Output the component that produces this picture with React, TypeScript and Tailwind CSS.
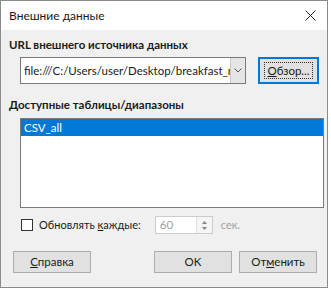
import React from 'react';

const App: React.FC = () => {
  return (
    <div className="w-[331px] h-[292px] bg-white" style={{ fontFamily: 'Lato, "Noto Sans", sans-serif' }}>
      <div className="w-[328px] h-[288px] border border-[#8a8a8a] bg-[#f0f0f0] flex flex-col">
        {/* title bar */}
        <div className="h-[29px] bg-white flex items-center justify-between pl-[8px] pr-[9px]">
          <span className="text-[12px] text-[#1a1a1a]">Внешние данные</span>
          <svg width="11" height="11" viewBox="0 0 11 11" className="mr-[2px]">
            <path d="M0.5 0.5 L10.5 10.5 M10.5 0.5 L0.5 10.5" stroke="#222" strokeWidth="1" />
          </svg>
        </div>

        <div className="flex flex-col px-[8px] pt-[7px]">
          <span className="text-[11.5px] font-bold text-[#1a1a1a] leading-[16px]">URL внешнего источника данных</span>

          <div className="flex items-center mt-[4px] pl-[11px]">
            <div className="w-[226px] h-[27px] bg-white border border-[#7a7a7a] flex">
              <div className="flex-1 overflow-hidden whitespace-nowrap text-[11.5px] leading-[25px] pl-[3px] text-[#1a1a1a]">
                file:///C:/Users/user/Desktop/breakfast_menu.xml
              </div>
              <div className="w-[15px] bg-[#e5e5e5] border-l border-[#c8c8c8] flex items-center justify-center">
                <svg width="8" height="5" viewBox="0 0 8 5">
                  <path d="M0.5 0.5 L4 4 L7.5 0.5" stroke="#555" strokeWidth="1" fill="none" />
                </svg>
              </div>
            </div>
            <button className="ml-[12px] w-[65px] h-[27px] bg-[#e1e1e1] border-2 border-[#0078d7] flex items-center justify-center">
              <span className="border border-dotted border-[#333] px-[2px] text-[11.5px] leading-[15px] text-[#1a1a1a]">
                <span className="underline">О</span>бзор...
              </span>
            </button>
          </div>

          <span className="text-[11.5px] font-bold text-[#1a1a1a] leading-[16px] mt-[13px]">Доступные таблицы/диапазоны</span>

          <div className="ml-[11px] mt-[5px] w-[304px] h-[90px] bg-white border border-[#7a7a7a]">
            <div className="h-[17px] bg-[#0078d7] text-white text-[11.5px] leading-[17px] pl-[3px]">CSV_all</div>
          </div>

          <div className="flex items-center mt-[8px] pl-[12px] h-[18px]">
            <div className="w-[12px] h-[12px] border border-[#333] bg-white" />
            <span className="ml-[6px] text-[11px] text-[#1a1a1a]">
              Обновлять <span className="underline">к</span>аждые:
            </span>
            <div className="ml-[14px] w-[58px] h-[18px] bg-white border border-[#cccccc] flex">
              <span className="flex-1 text-[11.5px] leading-[16px] pl-[4px] text-[#a0a0a0]">60</span>
              <div className="w-[16px] flex flex-col items-center justify-center gap-[3px] border-l border-[#e0e0e0] bg-[#f5f5f5]">
                <svg width="5" height="3" viewBox="0 0 5 3"><path d="M0 3 L2.5 0 L5 3 Z" fill="#888" /></svg>
                <svg width="5" height="3" viewBox="0 0 5 3"><path d="M0 0 L2.5 3 L5 0 Z" fill="#888" /></svg>
              </div>
            </div>
            <span className="ml-[8px] text-[11px] text-[#a0a0a0]">сек.</span>
          </div>

          <div className="flex items-center mt-[17px] pl-[4px]">
            <button className="w-[78px] h-[22px] bg-[#e1e1e1] border border-[#adadad] text-[11.5px] text-[#1a1a1a]">
              <span className="underline">С</span>правка
            </button>
            <button className="ml-[63px] w-[78px] h-[22px] bg-[#e1e1e1] border border-[#adadad] text-[11.5px] text-[#1a1a1a]">
              OK
            </button>
            <button className="ml-[7px] w-[78px] h-[22px] bg-[#e1e1e1] border border-[#adadad] text-[11.5px] text-[#1a1a1a]">
              От<span className="underline">м</span>енить
            </button>
          </div>
        </div>
      </div>
    </div>
  );
};

export default App;
